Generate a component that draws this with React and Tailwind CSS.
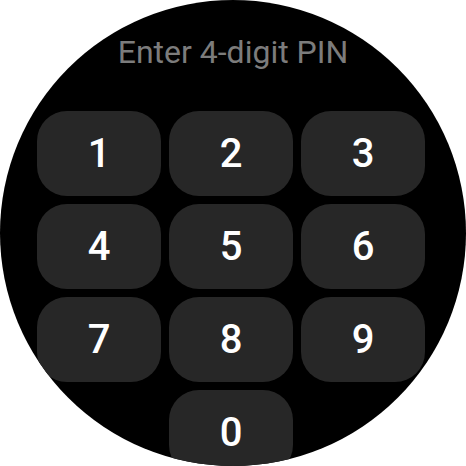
import React from "react";

const keys = ["1", "2", "3", "4", "5", "6", "7", "8", "9"];

export default function App() {
  return (
    <div className="w-[466px] h-[466px] bg-white">
      <div className="w-[466px] h-[466px] rounded-full bg-black overflow-hidden flex flex-col font-['Roboto',sans-serif]">
        {/* Title */}
        <p className="pt-[34px] text-center text-[32px] leading-[36px] text-[#7c7c7c]">
          Enter 4-digit PIN
        </p>

        {/* Keypad */}
        <div className="mt-[41px] ml-[37px] grid grid-cols-[124px_124px_124px] gap-x-[8px] gap-y-[8px]">
          {keys.map((k) => (
            <button
              key={k}
              className="h-[85px] rounded-[30px] bg-[#272727] text-white text-[40px] font-medium leading-none flex items-center justify-center"
            >
              {k}
            </button>
          ))}
          <button className="col-start-2 h-[85px] rounded-[30px] bg-[#272727] text-white text-[40px] font-medium leading-none flex items-center justify-center">
            0
          </button>
        </div>
      </div>
    </div>
  );
}
